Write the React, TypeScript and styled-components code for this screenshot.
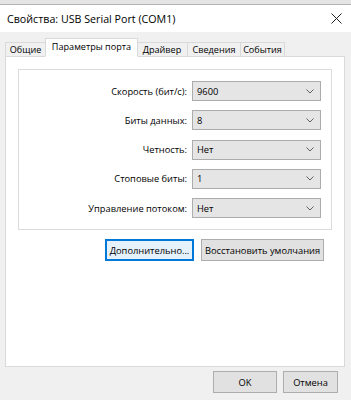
import styled, { createGlobalStyle } from "styled-components";

const GlobalStyle = createGlobalStyle`
  html, body {
    margin: 0;
    padding: 0;
    background: #f0f0f0;
  }
  body {
    font-family: "Open Sans", "Noto Sans", sans-serif;
    color: #000;
  }
`;

const Window = styled.div`
  width: 351px;
  height: 400px;
  display: flex;
  flex-direction: column;
  background: #f0f0f0;
  overflow: hidden;
`;

const TopStrip = styled.div`
  height: 4px;
  background: #e4e4e4;
  border-bottom: 1px solid #b4b4b4;
`;

const TitleBar = styled.div`
  height: 27px;
  background: #fff;
  display: flex;
  align-items: center;
  justify-content: space-between;
  padding: 0 8px 0 7px;
  font-size: 10.7px;
`;

const CloseIcon = styled.svg`
  width: 11px;
  height: 11px;
  margin-right: 1px;
`;

const Content = styled.div`
  padding: 7px 6px 0 5px;
  display: flex;
  flex-direction: column;
`;

const TabStrip = styled.div`
  display: flex;
  align-items: flex-end;
  height: 18px;
  padding-left: 1px;
  position: relative;
  z-index: 1;
  margin-bottom: -1px;
`;

const Tab = styled.div<{ active?: boolean; width: number }>`
  box-sizing: border-box;
  width: ${({ width }) => width}px;
  height: ${({ active }) => (active ? "19px" : "15px")};
  padding-bottom: ${({ active }) => (active ? "2px" : "0")};
  margin-left: -1px;
  margin-right: ${({ active }) => (active ? "-1px" : "0")};
  background: ${({ active }) => (active ? "#fff" : "#f0f0f0")};
  border: 1px solid #d9d9d9;
  border-bottom: 1px solid ${({ active }) => (active ? "#fff" : "#d9d9d9")};
  display: flex;
  align-items: center;
  justify-content: center;
  font-size: 9.1px;
  white-space: nowrap;
  position: relative;
  z-index: ${({ active }) => (active ? 2 : 1)};
`;

const Panel = styled.div`
  box-sizing: border-box;
  height: 311px;
  background: #fff;
  border: 1px solid #d9d9d9;
  padding: 12px 12px 0 12px;
  display: flex;
  flex-direction: column;
`;

const GroupBox = styled.div`
  box-sizing: border-box;
  height: 161px;
  border: 1px solid #dcdcdc;
  padding: 11px 10px 0 0;
  display: grid;
  grid-template-columns: 1fr 129px;
  grid-auto-rows: 20px;
  row-gap: 9.25px;
  column-gap: 5px;
  align-items: center;
`;

const Label = styled.div`
  text-align: right;
  font-size: 9.3px;
  white-space: nowrap;
`;

const Combo = styled.div`
  box-sizing: border-box;
  height: 20px;
  background: #e5e5e5;
  border: 1px solid #acacac;
  display: flex;
  align-items: center;
  justify-content: space-between;
  padding: 0 6px 0 4px;
  font-size: 9.3px;
`;

const Chevron = styled.svg`
  width: 8px;
  height: 5px;
`;

const ActionRow = styled.div`
  display: flex;
  justify-content: flex-end;
  gap: 7px;
  margin-top: 9px;
  padding-right: 8px;
`;

const Button = styled.div<{ width: number; focused?: boolean }>`
  box-sizing: border-box;
  width: ${({ width }) => width}px;
  height: 22px;
  background: ${({ focused }) => (focused ? "#e5f1fb" : "#e1e1e1")};
  border: 1px solid ${({ focused }) => (focused ? "#0078d7" : "#adadad")};
  box-shadow: ${({ focused }) => (focused ? "inset 0 0 0 1px #0078d7" : "none")};
  display: flex;
  align-items: center;
  justify-content: center;
  font-size: 9.3px;
  white-space: nowrap;
`;

const Footer = styled.div`
  display: flex;
  justify-content: flex-end;
  gap: 6px;
  margin-top: 4px;
  padding-right: 7px;
`;

const fields = [
  { label: "Скорость (бит/с):", value: "9600" },
  { label: "Биты данных:", value: "8" },
  { label: "Четность:", value: "Нет" },
  { label: "Стоповые биты:", value: "1" },
  { label: "Управление потоком:", value: "Нет" },
];

const tabs = [
  { title: "Общие", width: 41 },
  { title: "Параметры порта", width: 93 },
  { title: "Драйвер", width: 52 },
  { title: "Сведения", width: 54 },
  { title: "События", width: 45 },
];

export default function App() {
  return (
    <>
      <GlobalStyle />
      <Window>
        <TopStrip />
        <TitleBar>
          <span>Свойства: USB Serial Port (COM1)</span>
          <CloseIcon viewBox="0 0 11 11">
            <path d="M0.5 0.5 L10.5 10.5 M10.5 0.5 L0.5 10.5" stroke="#222" strokeWidth="1" />
          </CloseIcon>
        </TitleBar>
        <Content>
          <TabStrip>
            {tabs.map((t, i) => (
              <Tab key={`tab-${i}`} active={i === 1} width={t.width}>
                {t.title}
              </Tab>
            ))}
          </TabStrip>
          <Panel>
            <GroupBox>
              {fields.map((f, i) => [
                <Label key={`label-${i}`}>{f.label}</Label>,
                <Combo key={`combo-${i}`}>
                  <span>{f.value}</span>
                  <Chevron viewBox="0 0 8 5">
                    <path d="M0.5 0.5 L4 4 L7.5 0.5" fill="none" stroke="#606060" strokeWidth="1" />
                  </Chevron>
                </Combo>,
              ])}
            </GroupBox>
            <ActionRow>
              <Button width={89} focused>
                Дополнительно...
              </Button>
              <Button width={123}>Восстановить умолчания</Button>
            </ActionRow>
          </Panel>
          <Footer>
            <Button width={64}>OK</Button>
            <Button width={55}>Отмена</Button>
          </Footer>
        </Content>
      </Window>
    </>
  );
}
